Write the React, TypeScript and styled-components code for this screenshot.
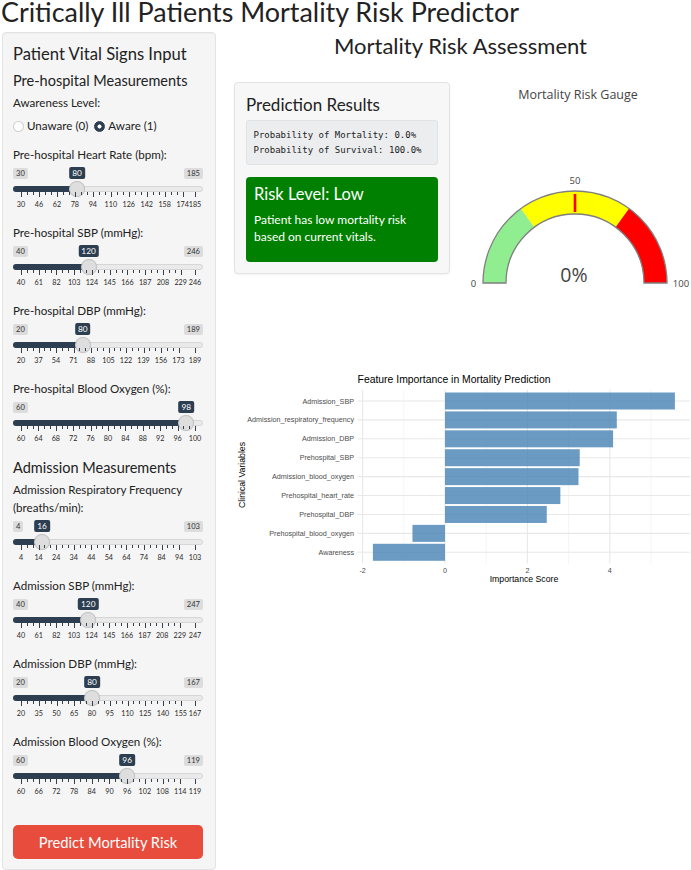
import React from "react";
import styled, { createGlobalStyle } from "styled-components";

const GlobalStyle = createGlobalStyle`
  html, body {
    margin: 0;
    padding: 0;
    background: #fff;
  }
  body {
    font-family: Lato, "Open Sans", sans-serif;
    color: #222;
  }
  * {
    box-sizing: border-box;
  }
`;

const Page = styled.div`
  width: 691px;
`;

const PageTitle = styled.h1`
  margin: 0;
  padding: 1px 0 0 1px;
  font-size: 26.9px;
  line-height: 22px;
  font-weight: 400;
  white-space: nowrap;
`;

const Columns = styled.div`
  display: flex;
  align-items: flex-start;
  margin-top: 9px;
`;

const Sidebar = styled.div`
  width: 214px;
  margin-left: 2px;
  padding: 10px 12px 10px 10px;
  background: #f5f5f5;
  border: 1px solid #e3e3e3;
  border-radius: 4px;
  box-shadow: inset 0 1px 1px rgba(0, 0, 0, 0.03);
`;

const PanelTitle = styled.h3`
  margin: 0;
  font-size: 16.6px;
  line-height: 22px;
  font-weight: 400;
  white-space: nowrap;
`;

const SectionTitle = styled.h4<{ $gap: number }>`
  margin: ${(p) => p.$gap}px 0 0;
  font-size: 14.5px;
  line-height: 20px;
  font-weight: 400;
  white-space: nowrap;
`;

const FieldLabel = styled.div`
  margin-top: 3px;
  font-size: 11.6px;
  line-height: 18px;
`;

const RadioRow = styled.div`
  display: flex;
  align-items: center;
  margin-top: 5px;
  margin-bottom: 11px;
  font-size: 11.6px;
  line-height: 18px;
`;

const RadioOption = styled.label`
  display: flex;
  align-items: center;
  gap: 3px;
  margin-right: 6px;
`;

const RadioDot = styled.span<{ $on: boolean }>`
  width: 11px;
  height: 11px;
  border-radius: 50%;
  border: 1px solid ${(p) => (p.$on ? "#2c3e50" : "rgba(0,0,0,0.18)")};
  background: ${(p) =>
    p.$on ? "radial-gradient(circle, #fff 0 1.8px, #2c3e50 2.3px)" : "#fff"};
`;

const Group = styled.div`
  margin-bottom: 15px;
`;

const SliderBox = styled.div`
  position: relative;
  margin-top: 3.5px;
`;

const Limits = styled.div`
  display: flex;
  justify-content: space-between;
  height: 11px;
`;

const Tag = styled.span<{ $hidden?: boolean }>`
  visibility: ${(p) => (p.$hidden ? "hidden" : "visible")};
  padding: 0.5px 3px;
  font-size: 7.6px;
  line-height: 10px;
  color: #333;
  background: rgba(0, 0, 0, 0.1);
  border-radius: 2px;
`;

const ValueTag = styled.span`
  position: absolute;
  top: -0.5px;
  transform: translateX(-50%);
  padding: 0.5px 3px;
  font-size: 8.3px;
  line-height: 10.5px;
  color: #fff;
  background: #2c3e50;
  border-radius: 2px;
`;

const Track = styled.div`
  position: relative;
  height: 6px;
  margin-top: 7.5px;
  background: #eaeaea;
  border: 1px solid #d6d6d6;
  border-radius: 4px;
`;

const Fill = styled.div`
  position: absolute;
  left: -1px;
  top: -1px;
  bottom: -1px;
  background: #2c3e50;
  border-radius: 4px 0 0 4px;
`;

const Handle = styled.div`
  position: absolute;
  top: -6px;
  width: 16px;
  height: 16px;
  border-radius: 50%;
  background: #dedede;
  border: 1px solid #c4c4c4;
  box-shadow: 0 0 1px rgba(0, 0, 0, 0.15);
`;

const Grid = styled.div`
  position: relative;
  height: 17px;
  margin: 0 8px;
`;

const Tick = styled.span<{ $big: boolean }>`
  position: absolute;
  top: 0;
  width: 1px;
  height: ${(p) => (p.$big ? 5 : 3)}px;
  background: #35404b;
`;

const TickText = styled.span`
  position: absolute;
  top: 8px;
  transform: translateX(-50%);
  font-size: 7.2px;
  line-height: 9px;
  color: #2a2a2a;
  white-space: nowrap;
`;

const PredictButton = styled.button`
  display: block;
  width: 100%;
  height: 34px;
  margin-top: 28.5px;
  border: none;
  border-radius: 5px;
  background: #e74c3c;
  color: #fff;
  font-family: Lato, sans-serif;
  font-size: 14.7px;
`;

const Main = styled.div`
  flex: 1;
  margin-left: 14px;
`;

const MainTitle = styled.h3`
  margin: 0;
  text-align: center;
  font-size: 22px;
  line-height: 28px;
  font-weight: 400;
`;

const TopRow = styled.div`
  display: flex;
  align-items: flex-start;
  margin-top: 22px;
`;

const ResultsWell = styled.div`
  width: 216px;
  margin-left: 4px;
  padding: 10px 11px 11px;
  background: #f7f7f7;
  border: 1px solid #e3e3e3;
  border-radius: 4px;
  box-shadow: 0 1px 2px rgba(0, 0, 0, 0.05);
`;

const ResultsTitle = styled.h3`
  margin: 0;
  font-size: 17px;
  line-height: 23px;
  font-weight: 400;
`;

const Readout = styled.pre`
  margin: 4px 0 0;
  padding: 6.5px 6.5px 6px;
  font-family: "DejaVu Sans Mono", "Liberation Mono", monospace;
  font-size: 9px;
  line-height: 15px;
  color: #222;
  background: #ecedef;
  border: 1px solid #e0e2e4;
  border-radius: 3px;
`;

const RiskBox = styled.div<{ $tone: string }>`
  margin-top: 12px;
  padding: 7.5px 8px 17px;
  background: ${(p) => p.$tone};
  color: #fff;
  border-radius: 4px;
`;

const RiskHeading = styled.h4`
  margin: 0;
  font-size: 16.5px;
  line-height: 20px;
  font-weight: 400;
`;

const RiskNote = styled.p`
  margin: 6.5px 0 0;
  font-size: 12px;
  line-height: 17.3px;
`;

const GaugeSvg = styled.svg`
  display: block;
  margin-left: 10px;
  flex: none;
`;

const ChartSvg = styled.svg`
  display: block;
  margin-top: 58px;
`;

type SliderSpec = {
  label: string;
  min: number;
  max: number;
  value: number;
};

const preHospital: SliderSpec[] = [
  { label: "Pre-hospital Heart Rate (bpm):", min: 30, max: 185, value: 80 },
  { label: "Pre-hospital SBP (mmHg):", min: 40, max: 246, value: 120 },
  { label: "Pre-hospital DBP (mmHg):", min: 20, max: 189, value: 80 },
  { label: "Pre-hospital Blood Oxygen (%):", min: 60, max: 100, value: 98 },
];

const admission: SliderSpec[] = [
  {
    label: "Admission Respiratory Frequency (breaths/min):",
    min: 4,
    max: 103,
    value: 16,
  },
  { label: "Admission SBP (mmHg):", min: 40, max: 247, value: 120 },
  { label: "Admission DBP (mmHg):", min: 20, max: 167, value: 80 },
  { label: "Admission Blood Oxygen (%):", min: 60, max: 119, value: 96 },
];

// same tick layout as shiny's sliderInput grid
function buildGrid(min: number, max: number) {
  const steps = max - min;
  const scale = Math.ceil(steps / 10);
  const count = steps / scale;
  const bigP = 100 / count;
  const big: { pos: number; text: number }[] = [];
  const small: number[] = [];
  for (let i = 0; i < count + 1; i++) {
    const raw = bigP * i;
    const capped = raw > 100.0001;
    const pos = capped ? 100 : raw;
    big.push({ pos, text: capped || pos >= 99.999 ? max : min + scale * i });
    if (i > 0 && !capped) {
      small.push(pos - bigP / 3, pos - (2 * bigP) / 3);
    }
  }
  return { big, small };
}

const TRACK = 190;
const HANDLE = 16;

function RangeSlider({ label, min, max, value }: SliderSpec) {
  const pct = (value - min) / (max - min);
  const center = HANDLE / 2 + pct * (TRACK - HANDLE);
  const grid = buildGrid(min, max);
  const valueW = String(value).length * 4.8 + 6;
  const minW = String(min).length * 4.35 + 6;
  const maxW = String(max).length * 4.35 + 6;
  const hideMin = center - valueW / 2 < minW + 1;
  const hideMax = center + valueW / 2 > TRACK - maxW - 1;

  return (
    <Group>
      <FieldLabel>{label}</FieldLabel>
      <SliderBox>
        <Limits>
          <Tag $hidden={hideMin}>{min}</Tag>
          <Tag $hidden={hideMax}>{max}</Tag>
        </Limits>
        <ValueTag style={{ left: center }}>{value}</ValueTag>
        <Track>
          <Fill style={{ width: center + 1 }} />
          <Handle style={{ left: center - HANDLE / 2 - 1 }} />
        </Track>
        <Grid>
          {grid.small.map((p, i) => (
            <Tick key={`s${i}`} $big={false} style={{ left: `${p}%` }} />
          ))}
          {grid.big.map((b, i) => (
            <Tick key={`b${i}`} $big style={{ left: `${b.pos}%` }} />
          ))}
          {grid.big.map((b, i) => (
            <TickText key={`t${i}`} style={{ left: `${b.pos}%` }}>
              {b.text}
            </TickText>
          ))}
        </Grid>
      </SliderBox>
    </Group>
  );
}

function RiskGauge() {
  const cx = 115;
  const cy = 201;
  const ro = 92;
  const ri = 69;
  const pt = (v: number, r: number) => {
    const a = Math.PI * (1 - v / 100);
    return [cx + r * Math.cos(a), cy - r * Math.sin(a)];
  };
  const band = (a: number, b: number) => {
    const [x1, y1] = pt(a, ro);
    const [x2, y2] = pt(b, ro);
    const [x3, y3] = pt(b, ri);
    const [x4, y4] = pt(a, ri);
    return `M${x1} ${y1} A${ro} ${ro} 0 0 1 ${x2} ${y2} L${x3} ${y3} A${ri} ${ri} 0 0 0 ${x4} ${y4} Z`;
  };
  const [tx1, ty1] = pt(50, 71);
  const [tx2, ty2] = pt(50, 89);
  const font = "'Open Sans', Verdana, Arial, sans-serif";

  return (
    <GaugeSvg width={231} height={220} viewBox="0 0 231 220">
      <text x={118} y={17.3} textAnchor="middle" fontFamily={font} fontSize={12.5} fill="#444">
        Mortality Risk Gauge
      </text>
      <path d={band(0, 30)} fill="#90ee90" />
      <path d={band(30, 70)} fill="#ffff00" />
      <path d={band(70, 100)} fill="#ff0000" />
      <path d={band(0, 100)} fill="none" stroke="#7f7f7f" strokeWidth={1.3} />
      <line x1={tx1} y1={ty1} x2={tx2} y2={ty2} stroke="#ff0000" strokeWidth={2.6} />
      <text x={115} y={102} textAnchor="middle" fontFamily={font} fontSize={9.5} fill="#444">
        50
      </text>
      <text x={13.5} y={204.5} textAnchor="middle" fontFamily={font} fontSize={9.5} fill="#444">
        0
      </text>
      <text x={221} y={204.5} textAnchor="middle" fontFamily={font} fontSize={9.5} fill="#444">
        100
      </text>
      <text x={114} y={200} textAnchor="middle" fontFamily={font} fontSize={19.5} fill="#444">
        0%
      </text>
    </GaugeSvg>
  );
}

const importance = [
  { name: "Admission_SBP", score: 5.58 },
  { name: "Admission_respiratory_frequency", score: 4.17 },
  { name: "Admission_DBP", score: 4.08 },
  { name: "Prehospital_SBP", score: 3.27 },
  { name: "Admission_blood_oxygen", score: 3.24 },
  { name: "Prehospital_heart_rate", score: 2.8 },
  { name: "Prehospital_DBP", score: 2.47 },
  { name: "Prehospital_blood_oxygen", score: -0.79 },
  { name: "Awareness", score: -1.75 },
];

function ImportanceChart() {
  const zero = 215;
  const unit = 41.2;
  const left = 127.7;
  const right = 460;
  const top = 29.7;
  const bottom = 203.6;
  const rowY = (i: number) => 41 + i * 18.91;
  const barH = 17;
  const xs = (v: number) => zero + v * unit;
  const font = "'Liberation Sans', Arial, sans-serif";

  return (
    <ChartSvg width={461} height={232} viewBox="0 0 461 232">
      <text x={224} y={22.8} textAnchor="middle" fontFamily={font} fontSize={10.4} fill="#000">
        Feature Importance in Mortality Prediction
      </text>
      {[-1, 1, 3, 5].map((v) => (
        <line key={`m${v}`} x1={xs(v)} x2={xs(v)} y1={top} y2={bottom} stroke="#ededed" strokeWidth={0.6} />
      ))}
      {[-2, 0, 2, 4].map((v) => (
        <line key={`M${v}`} x1={xs(v)} x2={xs(v)} y1={top} y2={bottom} stroke="#e8e8e8" strokeWidth={1.1} />
      ))}
      {importance.map((_, i) => (
        <line key={`h${i}`} x1={left} x2={right} y1={rowY(i)} y2={rowY(i)} stroke="#e8e8e8" strokeWidth={1.1} />
      ))}
      {importance.map((d, i) => {
        const x1 = Math.min(xs(0), xs(d.score));
        const w = Math.abs(xs(d.score) - xs(0));
        return (
          <rect key={d.name} x={x1} y={rowY(i) - barH / 2} width={w} height={barH} fill="#4682b4" fillOpacity={0.8} />
        );
      })}
      {importance.map((d, i) => (
        <text key={`l${d.name}`} x={124} y={rowY(i) + 2.5} textAnchor="end" fontFamily={font} fontSize={7.2} fill="#4d4d4d">
          {d.name}
        </text>
      ))}
      {[-2, 0, 2, 4].map((v) => (
        <text key={`t${v}`} x={xs(v)} y={212.6} textAnchor="middle" fontFamily={font} fontSize={7.2} fill="#4d4d4d">
          {v}
        </text>
      ))}
      <text x={294} y={222.3} textAnchor="middle" fontFamily={font} fontSize={8.7} fill="#000">
        Importance Score
      </text>
      <text
        x={14.9}
        y={115}
        transform="rotate(-90 14.9 115)"
        textAnchor="middle"
        fontFamily={font}
        fontSize={8.7}
        fill="#000"
      >
        Clinical Variables
      </text>
    </ChartSvg>
  );
}

export default function App() {
  return (
    <Page>
      <GlobalStyle />
      <PageTitle>Critically Ill Patients Mortality Risk Predictor</PageTitle>
      <Columns>
        <Sidebar>
          <PanelTitle>Patient Vital Signs Input</PanelTitle>
          <SectionTitle $gap={6}>Pre-hospital Measurements</SectionTitle>
          <FieldLabel>Awareness Level:</FieldLabel>
          <RadioRow>
            <RadioOption>
              <RadioDot $on={false} />
              Unaware (0)
            </RadioOption>
            <RadioOption>
              <RadioDot $on />
              Aware (1)
            </RadioOption>
          </RadioRow>
          {preHospital.map((s) => (
            <RangeSlider key={s.label} {...s} />
          ))}
          <SectionTitle $gap={0}>Admission Measurements</SectionTitle>
          {admission.map((s) => (
            <RangeSlider key={s.label} {...s} />
          ))}
          <PredictButton>Predict Mortality Risk</PredictButton>
        </Sidebar>
        <Main>
          <MainTitle>Mortality Risk Assessment</MainTitle>
          <TopRow>
            <ResultsWell>
              <ResultsTitle>Prediction Results</ResultsTitle>
              <Readout>
                {"Probability of Mortality: 0.0%\nProbability of Survival: 100.0%"}
              </Readout>
              <RiskBox $tone="#008000">
                <RiskHeading>Risk Level: Low</RiskHeading>
                <RiskNote>Patient has low mortality risk based on current vitals.</RiskNote>
              </RiskBox>
            </ResultsWell>
            <RiskGauge />
          </TopRow>
          <ImportanceChart />
        </Main>
      </Columns>
    </Page>
  );
}
